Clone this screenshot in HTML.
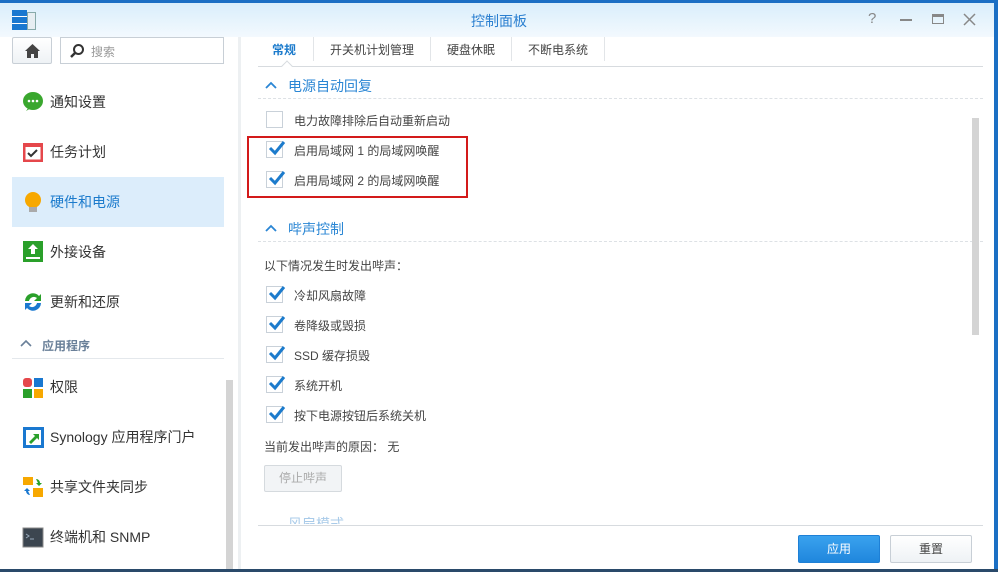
<!DOCTYPE html><html><head><meta charset="utf-8"><style>
*{margin:0;padding:0;box-sizing:border-box}
body{width:998px;height:572px;overflow:hidden;background:#fff;font-family:"Liberation Sans","Noto Sans CJK SC",sans-serif;position:relative;color:#444}
.a{position:absolute}
.title{left:0;top:0;width:998px;height:37px;background:linear-gradient(#d9eefb,#f3f9fe);border-top:3px solid #1b6fc4}
.rb{right:0;top:0;width:4px;height:572px;background:#1b6fc4}
.bb{left:0;bottom:0;width:998px;height:3px;background:#2a4a6a}
.si{left:12px;width:212px;height:50px;font-size:14px;color:#333;display:flex;align-items:center;padding-left:38px}
.si.sel{background:#dcedfb;color:#1c7bcc}
.ic{position:absolute;left:10px;top:14px;width:22px;height:22px}
.cb{width:17px;height:17px;border:1px solid #c9d1d9;background:#fff;position:absolute}
.lbl{font-size:12px;color:#444;position:absolute}
.ck{position:absolute;left:1px;top:-2px}
.sec{font-size:14px;color:#2a86d4;position:absolute}
</style></head><body>
<div class="a title"></div>
<div class="a" style="left:12px;top:10px;width:24px;height:20px"><div class="a" style="left:0;top:0;width:15px;height:20px;background:#1a78d0"></div><div class="a" style="left:15px;top:2px;width:9px;height:18px;background:#e7eef2;border:1px solid #8aa"></div><div class="a" style="left:0;top:6px;width:15px;height:1px;background:#fff"></div><div class="a" style="left:0;top:13px;width:15px;height:1px;background:#fff"></div></div>
<div class="a" style="left:0;top:11px;width:998px;text-align:center;font-size:14px;color:#2a7fd0">控制面板</div>
<div class="a" style="left:868px;top:10px;font-size:15px;color:#888">?</div>
<div class="a" style="left:900px;top:19px;width:12px;height:2px;background:#888"></div>
<div class="a" style="left:932px;top:14px;width:12px;height:10px;border:1.5px solid #888;border-top-width:3px"></div>
<svg class="a" style="left:963px;top:13px" width="13" height="13"><path d="M1 1L12 12M12 1L1 12" stroke="#888" stroke-width="1.5"/></svg>
<div class="a rb"></div>
<!-- sidebar -->
<div class="a" style="left:12px;top:37px;width:40px;height:27px;border:1px solid #c8cfd6;border-radius:2px;background:linear-gradient(#fff,#eef2f5)"><svg style="position:absolute;left:11px;top:5px" width="17" height="16"><path d="M8.5 1L1 8h2v7h4v-4h3v4h4V8h2z" fill="#444"/></svg></div>
<div class="a" style="left:60px;top:37px;width:164px;height:27px;border:1px solid #c8cfd6;background:#fff"><svg style="position:absolute;left:8px;top:5px" width="16" height="16"><circle cx="9.5" cy="6.5" r="4.5" fill="none" stroke="#333" stroke-width="2"/><path d="M6 10L2 14" stroke="#333" stroke-width="2.5"/></svg><span style="position:absolute;left:30px;top:5px;font-size:12px;color:#999">搜索</span></div>
<div class="a si" style="top:77px"><svg class="ic" viewBox="0 0 22 22"><ellipse cx="11" cy="10" rx="10" ry="9" fill="#3aa72e"/><path d="M4 20l3-4h4z" fill="#3aa72e"/><circle cx="7" cy="10" r="1.3" fill="#fff"/><circle cx="11" cy="10" r="1.3" fill="#fff"/><circle cx="15" cy="10" r="1.3" fill="#fff"/></svg>通知设置</div>
<div class="a si" style="top:127px"><svg class="ic" viewBox="0 0 22 22"><rect x="1" y="2" width="20" height="19" fill="#e5474b"/><rect x="3.5" y="6" width="15" height="12.5" fill="#fff"/><path d="M6 12l3 3 6-6" stroke="#333" stroke-width="2" fill="none"/></svg>任务计划</div>
<div class="a si sel" style="top:177px"><svg class="ic" viewBox="0 0 22 22"><circle cx="11" cy="9" r="8" fill="#f7a800"/><rect x="7" y="16" width="8" height="5" fill="#aaa"/></svg>硬件和电源</div>
<div class="a si" style="top:227px"><svg class="ic" viewBox="0 0 22 22"><rect x="1" y="0" width="20" height="21" fill="#2aa02a"/><path d="M11 3l-5 5h3v5h4V8h3z" fill="#fff"/><rect x="4" y="16" width="14" height="2" fill="#fff"/></svg>外接设备</div>
<div class="a si" style="top:277px"><svg class="ic" viewBox="0 0 22 22"><path d="M3 10a8 8 0 0 1 14-5l2-2v7h-7l3-3a5 5 0 0 0-8 3z" fill="#2aa02a"/><path d="M19 12a8 8 0 0 1-14 5l-2 2v-7h7l-3 3a5 5 0 0 0 8-3z" fill="#1a78d0"/></svg>更新和还原</div>
<svg class="a" style="left:20px;top:339px" width="12" height="8"><path d="M1 7l5-5 5 5" stroke="#6a8099" stroke-width="1.6" fill="none"/></svg>
<div class="a" style="left:42px;top:337px;font-size:12px;font-weight:bold;color:#6a8099">应用程序</div>
<div class="a" style="left:12px;top:358px;width:212px;height:1px;background:#e4e8ec"></div>
<div class="a si" style="top:362px"><svg class="ic" viewBox="0 0 22 22"><rect x="1" y="2" width="9" height="9" rx="3" fill="#e5474b"/><rect x="12" y="2" width="9" height="9" fill="#1a78d0"/><rect x="1" y="13" width="9" height="9" fill="#2aa02a"/><rect x="12" y="13" width="9" height="9" fill="#f7a800"/></svg>权限</div>
<div class="a si" style="top:412px"><svg class="ic" viewBox="0 0 22 22"><rect x="1" y="1" width="21" height="21" fill="#1a78d0"/><rect x="4" y="4" width="15" height="15" fill="#fff"/><path d="M7 16l6-6-2-2h6v6l-2-2-6 6z" fill="#2aa02a"/></svg>Synology 应用程序门户</div>
<div class="a si" style="top:462px"><svg class="ic" viewBox="0 0 22 22"><rect x="1" y="1" width="10" height="8" fill="#f7a800"/><rect x="11" y="12" width="10" height="9" fill="#f7a800"/><path d="M14 3a4 4 0 0 1 4 4h2l-3 3-3-3h2" fill="#2aa02a"/><path d="M8 19a4 4 0 0 1-4-4H2l3-3 3 3H6" fill="#1a78d0"/></svg>共享文件夹同步</div>
<div class="a si" style="top:512px"><svg class="ic" viewBox="0 0 22 22"><rect x="1" y="2" width="20" height="19" fill="#3c4650" stroke="#888"/><path d="M4 8l3 2-3 2M8 13h4" stroke="#9ab" fill="none"/></svg>终端机和 SNMP</div>
<div class="a" style="left:226px;top:380px;width:7px;height:190px;background:#d4d4d4"></div>
<div class="a" style="left:238px;top:37px;width:3px;height:535px;background:#edf0f2"></div>
<!-- tabs -->
<div class="a" style="left:258px;top:66px;width:725px;height:1px;background:#d7dbdf"></div>
<div class="a" style="left:272px;top:41px;font-size:12px;font-weight:bold;color:#1c7bcc">常规</div>
<div class="a" style="left:283px;top:62px;width:8px;height:8px;background:#fff;border-left:1px solid #d7dbdf;border-top:1px solid #d7dbdf;transform:rotate(45deg)"></div>
<div class="a" style="left:313px;top:37px;width:1px;height:24px;background:#e2e5e8"></div>
<div class="a" style="left:330px;top:41px;font-size:12px;color:#444">开关机计划管理</div>
<div class="a" style="left:430px;top:37px;width:1px;height:24px;background:#e2e5e8"></div>
<div class="a" style="left:447px;top:41px;font-size:12px;color:#444">硬盘休眠</div>
<div class="a" style="left:511px;top:37px;width:1px;height:24px;background:#e2e5e8"></div>
<div class="a" style="left:528px;top:41px;font-size:12px;color:#444">不断电系统</div>
<div class="a" style="left:604px;top:37px;width:1px;height:24px;background:#e2e5e8"></div>
<!-- section 1 -->
<svg class="a" style="left:265px;top:81px" width="12" height="8"><path d="M1 7l5-5 5 5" stroke="#2a86d4" stroke-width="1.8" fill="none"/></svg>
<div class="sec" style="left:288px;top:76px">电源自动回复</div>
<div class="a" style="left:258px;top:98px;width:725px;border-top:1px dashed #dde1e5"></div>
<div class="cb" style="left:266px;top:111px"></div><div class="lbl" style="left:294px;top:112px">电力故障排除后自动重新启动</div>
<div class="cb" style="left:266px;top:141px"><svg class="ck" width="18" height="16"><path d="M2 8l5 5 9-11" stroke="#1c7bcc" stroke-width="3" fill="none"/></svg></div><div class="lbl" style="left:294px;top:142px">启用局域网 1 的局域网唤醒</div>
<div class="cb" style="left:266px;top:171px"><svg class="ck" width="18" height="16"><path d="M2 8l5 5 9-11" stroke="#1c7bcc" stroke-width="3" fill="none"/></svg></div><div class="lbl" style="left:294px;top:172px">启用局域网 2 的局域网唤醒</div>
<div class="a" style="left:247px;top:136px;width:221px;height:62px;border:2px solid #d31a1a"></div>
<!-- section 2 -->
<svg class="a" style="left:265px;top:224px" width="12" height="8"><path d="M1 7l5-5 5 5" stroke="#2a86d4" stroke-width="1.8" fill="none"/></svg>
<div class="sec" style="left:288px;top:219px">哔声控制</div>
<div class="a" style="left:258px;top:241px;width:725px;border-top:1px dashed #dde1e5"></div>
<div class="lbl" style="left:264px;top:257px">以下情况发生时发出哔声：</div>
<div class="cb" style="left:266px;top:286px"><svg class="ck" width="18" height="16"><path d="M2 8l5 5 9-11" stroke="#1c7bcc" stroke-width="3" fill="none"/></svg></div><div class="lbl" style="left:294px;top:287px">冷却风扇故障</div>
<div class="cb" style="left:266px;top:316px"><svg class="ck" width="18" height="16"><path d="M2 8l5 5 9-11" stroke="#1c7bcc" stroke-width="3" fill="none"/></svg></div><div class="lbl" style="left:294px;top:317px">卷降级或毁损</div>
<div class="cb" style="left:266px;top:346px"><svg class="ck" width="18" height="16"><path d="M2 8l5 5 9-11" stroke="#1c7bcc" stroke-width="3" fill="none"/></svg></div><div class="lbl" style="left:294px;top:347px">SSD 缓存损毁</div>
<div class="cb" style="left:266px;top:376px"><svg class="ck" width="18" height="16"><path d="M2 8l5 5 9-11" stroke="#1c7bcc" stroke-width="3" fill="none"/></svg></div><div class="lbl" style="left:294px;top:377px">系统开机</div>
<div class="cb" style="left:266px;top:406px"><svg class="ck" width="18" height="16"><path d="M2 8l5 5 9-11" stroke="#1c7bcc" stroke-width="3" fill="none"/></svg></div><div class="lbl" style="left:294px;top:407px">按下电源按钮后系统关机</div>
<div class="lbl" style="left:264px;top:438px">当前发出哔声的原因： 无</div>
<div class="a" style="left:264px;top:465px;width:78px;height:27px;border:1px solid #d5dade;border-radius:2px;background:#f2f4f6;font-size:12px;color:#aaa;text-align:center;line-height:25px">停止哔声</div>
<div class="a" style="left:288px;top:514px;font-size:14px;color:#a9cbe9;height:10px;overflow:hidden">风扇模式</div>
<div class="a" style="left:258px;top:525px;width:725px;height:1px;background:#d7dbdf"></div>
<div class="a" style="left:972px;top:118px;width:7px;height:217px;background:#d4d4d4"></div>
<div class="a" style="left:798px;top:535px;width:82px;height:28px;border:1px solid #1e80d6;border-radius:2px;background:linear-gradient(#3aa2ee,#1f86dd);color:#fff;font-size:12px;text-align:center;line-height:26px">应用</div>
<div class="a" style="left:890px;top:535px;width:82px;height:28px;border:1px solid #c8cfd6;border-radius:2px;background:linear-gradient(#fff,#eef2f5);color:#444;font-size:12px;text-align:center;line-height:26px">重置</div>
<div class="a bb"></div>
</body></html>
